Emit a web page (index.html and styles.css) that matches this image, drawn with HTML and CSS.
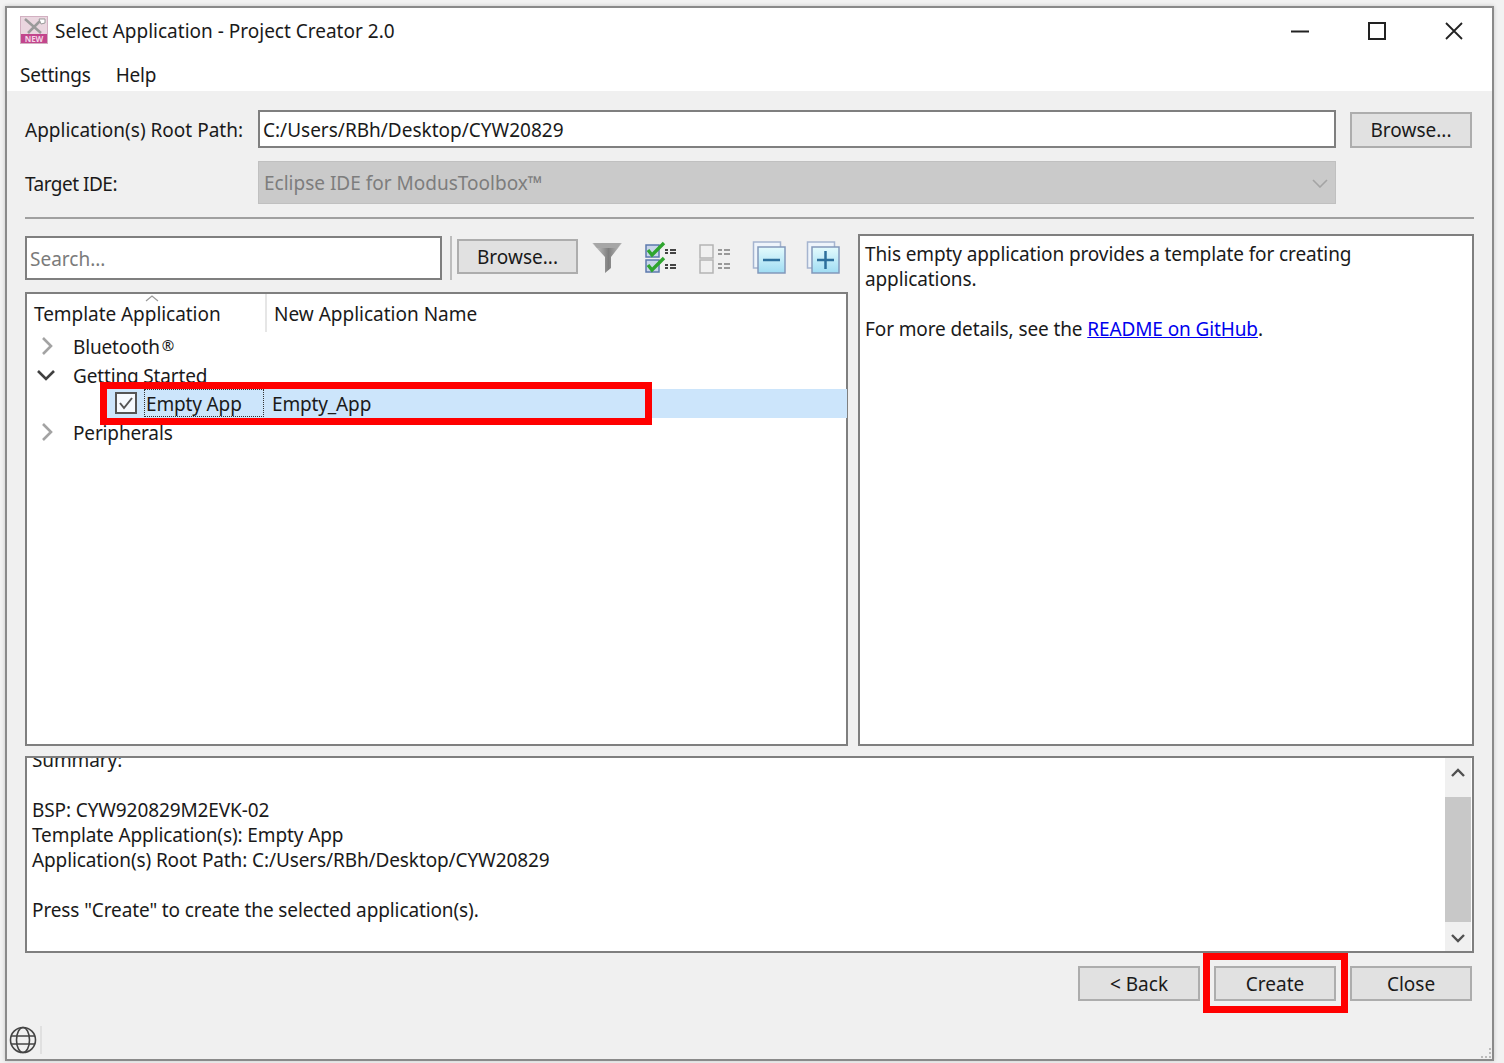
FILE: index.html
```html
<!DOCTYPE html>
<html lang="en">
<head>
<meta charset="utf-8">
<title>Select Application - Project Creator 2.0</title>
<link rel="stylesheet" href="styles.css">
</head>
<body>
<div class="window">
  <header class="titlebar">
    <svg class="app-icon" width="28" height="28" viewBox="0 0 28 28">
      <rect x="0.5" y="0.5" width="27" height="27" fill="#ead6df" stroke="#d2b0c1"/>
      <rect x="1" y="18" width="26" height="9" fill="#c2458c"/>
      <path d="M5 3 L21 17 M21 4 L8 17" stroke="#9a9a9a" stroke-width="2.5" fill="none"/>
      <path d="M19 3 L25 3 L25 7 L21 8z" fill="#ffffff" stroke="#999"/>
      <text x="14" y="26" class="app-icon-text">NEW</text>
    </svg>
    <span class="title">Select Application - Project Creator 2.0</span>
    <div class="win-controls">
      <svg width="18" height="18" viewBox="0 0 18 18"><path d="M0 9.5H18" stroke="#222" stroke-width="2"/></svg>
      <svg width="18" height="18" viewBox="0 0 18 18"><rect x="1" y="1" width="16" height="16" fill="none" stroke="#222" stroke-width="2"/></svg>
      <svg width="18" height="18" viewBox="0 0 18 18"><path d="M1 1L17 17M17 1L1 17" stroke="#222" stroke-width="1.8"/></svg>
    </div>
  </header>
  <nav class="menubar"><span>Settings</span><span>Help</span></nav>
  <main class="content">
    <div class="form-row root-row">
      <label class="form-label">Application(s) Root Path:</label>
      <div class="path-input">C:/Users/RBh/Desktop/CYW20829</div>
      <button class="btn">Browse...</button>
    </div>
    <div class="form-row ide-row">
      <label class="form-label target-label">Target IDE:</label>
      <div class="ide-select"><span>Eclipse IDE for ModusToolbox™</span>
        <svg width="16" height="9" viewBox="0 0 16 9"><path d="M1 1L8 8L15 1" fill="none" stroke="#a4a4a4" stroke-width="1.6"/></svg>
      </div>
    </div>
    <hr class="divider">
    <div class="panes">
      <section class="left-pane">
        <div class="toolbar">
          <div class="search">Search...</div>
          <div class="tool-sep"></div>
          <button class="btn">Browse...</button>
          <div class="tools">
            <svg width="34" height="34" viewBox="0 0 34 34">
              <defs><linearGradient id="fn" x1="0" x2="1" y1="0" y2="0"><stop offset="0" stop-color="#d6d6d6"/><stop offset=".55" stop-color="#7e7e7e"/><stop offset="1" stop-color="#c4c4c4"/></linearGradient></defs>
              <path d="M2 3H32L21 17V28L15 33V17Z" fill="url(#fn)"/><path d="M3 3H31L27 8H7Z" fill="#a6a6a6"/>
            </svg>
            <svg width="34" height="34" viewBox="0 0 34 34">
              <rect x="2" y="5" width="13" height="12" fill="#c9d5ea" stroke="#5c79ad" stroke-width="1.5"/>
              <rect x="2" y="20" width="13" height="12" fill="#c9d5ea" stroke="#5c79ad" stroke-width="1.5"/>
              <path d="M4 10L8 15L20 3M4 25L8 30L20 18" fill="none" stroke="#2fa52f" stroke-width="3.4"/>
              <path d="M21 12H24M26 12H32M21 15H24M26 15H32M21 27H24M26 27H32M21 30H24M26 30H32" stroke="#444" stroke-width="1.8" transform="translate(0,-2)"/>
            </svg>
            <svg width="34" height="34" viewBox="0 0 34 34">
              <rect x="2" y="5" width="13" height="13" fill="#f0f0f0" stroke="#b4b4b4" stroke-width="1.5"/>
              <rect x="2" y="20" width="13" height="13" fill="#f0f0f0" stroke="#b4b4b4" stroke-width="1.5"/>
              <path d="M20 10H24M26 10H32M20 14H24M26 14H32M20 24H24M26 24H32M20 28H24M26 28H32" stroke="#999" stroke-width="1.8"/>
            </svg>
            <svg width="34" height="34" viewBox="0 0 34 34">
              <defs><linearGradient id="bx" x1="0" x2="0" y1="0" y2="1"><stop offset="0" stop-color="#e4fbfd"/><stop offset="1" stop-color="#9fdcf3"/></linearGradient></defs>
              <rect x="1.5" y="2" width="27" height="26" fill="#eef4fb" stroke="#a5b4cf" stroke-width="1.5"/>
              <rect x="6" y="7" width="27" height="26" fill="url(#bx)" stroke="#8298bb" stroke-width="1.5"/>
              <path d="M11 20H28" stroke="#2d6f9c" stroke-width="2.5"/>
            </svg>
            <svg width="34" height="34" viewBox="0 0 34 34">
              <rect x="1.5" y="2" width="27" height="26" fill="#eef4fb" stroke="#a5b4cf" stroke-width="1.5"/>
              <rect x="6" y="7" width="27" height="26" fill="url(#bx)" stroke="#8298bb" stroke-width="1.5"/>
              <path d="M11 20H28M19.5 11V29" stroke="#2d6f9c" stroke-width="2.5"/>
            </svg>
          </div>
        </div>
        <div class="tree">
          <div class="tree-head">
            <svg class="sort-mark" width="14" height="7" viewBox="0 0 14 7"><path d="M1 6L7 1L13 6" fill="none" stroke="#9a9a9a" stroke-width="1.2"/></svg>
            <div class="col-a">Template Application</div>
            <div class="col-b">New Application Name</div>
          </div>
          <div class="tree-row">
            <svg class="chev" width="16" height="18" viewBox="0 0 16 18"><path d="M4 1L12 9L4 17" fill="none" stroke="#a3a3a3" stroke-width="2.6"/></svg>
            <span>Bluetooth<span class="reg">®</span></span>
          </div>
          <div class="tree-row">
            <svg class="chev chev-open" width="18" height="16" viewBox="0 0 18 16"><path d="M1 3L9 11L17 3" fill="none" stroke="#404040" stroke-width="2.6"/></svg>
            <span>Getting Started</span>
          </div>
          <div class="tree-row selected">
            <span class="check"><svg width="16" height="16" viewBox="0 0 16 16"><path d="M2 8L6 13L14 3" fill="none" stroke="#555" stroke-width="2"/></svg></span>
            <span class="focus-cell">Empty App</span>
            <span class="app-name">Empty_App</span>
          </div>
          <div class="tree-row">
            <svg class="chev" width="16" height="18" viewBox="0 0 16 18"><path d="M4 1L12 9L4 17" fill="none" stroke="#a3a3a3" stroke-width="2.6"/></svg>
            <span>Peripherals</span>
          </div>
        </div>
      </section>
      <section class="desc">
        <p>This empty application provides a template for creating applications.</p>
        <p>For more details, see the <a href="#">README on GitHub</a>.</p>
      </section>
    </div>
    <section class="summary">
      <div class="summary-text">
        <div>Summary:</div>
        <div>&nbsp;</div>
        <div>BSP: CYW920829M2EVK-02</div>
        <div>Template Application(s): Empty App</div>
        <div>Application(s) Root Path: C:/Users/RBh/Desktop/CYW20829</div>
        <div>&nbsp;</div>
        <div>Press "Create" to create the selected application(s).</div>
      </div>
      <div class="scrollbar">
        <svg width="14" height="10" viewBox="0 0 14 10"><path d="M1 8L7 2L13 8" fill="none" stroke="#505050" stroke-width="2.4"/></svg>
        <div class="thumb"></div>
        <svg width="14" height="10" viewBox="0 0 14 10"><path d="M1 2L7 8L13 2" fill="none" stroke="#505050" stroke-width="2.4"/></svg>
      </div>
    </section>
    <div class="actions">
      <button class="btn">&lt; Back</button>
      <button class="btn">Create</button>
      <button class="btn">Close</button>
    </div>
    <footer class="status">
      <svg width="28" height="28" viewBox="0 0 28 28" fill="none" stroke="#444" stroke-width="1.6">
        <circle cx="14" cy="14" r="12.5"/><ellipse cx="14" cy="14" rx="6.5" ry="12.5"/><path d="M2 10H26M2 18H26"/>
      </svg>
      <div class="status-sep"></div>
      <svg class="grip" width="10" height="10" viewBox="0 0 10 10"><path d="M8 0h2v2H8zM8 4h2v2H8zM4 8h2v2H4zM8 8h2v2H8zM0 8h2v2H0z" fill="#bbb"/></svg>
    </footer>
  </main>
  <div class="callout callout-row"></div>
  <div class="callout callout-create"></div>
</div>
</body>
</html>
```
FILE: styles.css
```css
* { box-sizing: border-box; }
html, body { margin: 0; height: 100%; }
body {
  background: #f2f2f2;
  padding: 6px 0 0 5px;
  font-family: "Noto Sans", "Open Sans", sans-serif;
  font-size: 19px;
  color: #1a1a1a;
  overflow: hidden;
}
.window {
  position: relative;
  width: 1489px;
  height: 1055px;
  border: 2px solid #8a8a8a;
  background: #fff;
  display: flex;
  flex-direction: column;
  box-shadow: 0 0 4px rgba(0,0,0,.18);
}
.titlebar {
  height: 44px;
  display: flex;
  align-items: center;
  padding: 0 30px 0 13px;
  flex: none;
}
.app-icon { flex: none; }
.app-icon-text { font-size: 8px; fill: #f4d4e6; text-anchor: middle; font-weight: 700; }
.title { margin-left: 7px; padding-top: 2px; }
.win-controls { margin-left: auto; display: flex; gap: 59px; margin-right: -1px; margin-top: 2px; }
.menubar {
  height: 39px;
  display: flex;
  gap: 25px;
  padding: 7px 0 0 13px;
  align-items: center;
  flex: none;
  letter-spacing: -.2px;
}
.content {
  flex: 1;
  background: #f0f0f0;
  padding: 19px 19px 0 18px;
  display: flex;
  flex-direction: column;
  min-height: 0;
}
.form-row { display: flex; align-items: center; flex: none; }
.root-row { height: 38px; }
.ide-row { height: 43px; margin-top: 13px; }
.form-label { width: 233px; flex: none; padding-top: 2px; }
.target-label { letter-spacing: -.5px; }
.path-input {
  width: 1078px;
  height: 38px;
  background: #fff;
  border: 2px solid #7f7f7f;
  padding: 2px 0 0 3px;
  display: flex;
  align-items: center;
  flex: none;
}
.root-row .btn { margin: 1px 0 0 14px; }
.ide-select {
  width: 1078px;
  height: 43px;
  background: #cacaca;
  border: 1px solid #c0c0c0;
  color: #7d7d7d;
  padding: 1px 7px 0 5px;
  display: flex;
  align-items: center;
  justify-content: space-between;
  flex: none;
}
.btn {
  width: 122px;
  height: 36px;
  background: #e1e1e1;
  border: 2px solid #adadad;
  font: inherit;
  color: #1a1a1a;
  padding: 0;
  flex: none;
}
.divider {
  border: 0;
  height: 2px;
  background: #a0a0a0;
  margin: 13px 0 15px;
  width: 1449px;
  flex: none;
}
.panes { display: flex; gap: 10px; height: 512px; flex: none; width: 1449px; }
.left-pane { width: 823px; display: flex; flex-direction: column; flex: none; padding-top: 1px; }
.toolbar { display: flex; align-items: center; height: 45px; flex: none; }
.search {
  width: 417px;
  height: 44px;
  background: #fff;
  border: 2px solid #7f7f7f;
  color: #7b7b7b;
  padding: 2px 0 0 3px;
  display: flex;
  align-items: center;
  flex: none;
}
.tool-sep { width: 2px; height: 44px; background: #bdbdbd; margin: 0 5px 0 8px; flex: none; }
.toolbar .btn { width: 121px; height: 35px; margin-top: -3px; padding-top: 2px; }
.tools { display: flex; gap: 20px; margin-left: 12px; margin-top: -2px; }
.tree {
  margin-top: 12px;
  flex: 1;
  background: #fff;
  border: 2px solid #7f7f7f;
  position: relative;
  min-height: 0;
}
.tree-head { display: flex; height: 38px; position: relative; align-items: center; }
.sort-mark { position: absolute; left: 118px; top: 1px; }
.col-a { width: 240px; padding-left: 7px; height: 100%; display: flex; align-items: center; border-right: 2px solid #e6e6e6; padding-top: 1px; letter-spacing: -.05px; }
.col-b { padding-left: 7px; padding-top: 1px; }
.tree-row { height: 28.6px; display: flex; align-items: center; position: relative; padding: 2px 0 0 46px; letter-spacing: -.15px; }
.tree-row .chev { position: absolute; left: 12px; top: 5px; }
.tree-row .chev-open { left: 10px; top: 7px; }
.reg { font-size: 15px; margin-left: 2px; vertical-align: 3px; }
.selected { background: #cce5fb; margin: 0 -1px 0 75px; padding: 0 0 0 13px; }
.selected .focus-cell, .selected .app-name { padding-top: 2px; }
.check {
  width: 22px;
  height: 22px;
  border: 2px solid #555;
  background: #f6fafe;
  display: flex;
  align-items: center;
  justify-content: center;
  flex: none;
}
.focus-cell {
  width: 120px;
  height: 28px;
  margin-left: 7px;
  padding-left: 1px;
  border: 1px dotted #333;
  display: flex;
  align-items: center;
  flex: none;
}
.app-name { margin-left: 8px; }
.desc {
  flex: 1;
  background: #fff;
  border: 2px solid #7f7f7f;
  padding: 6px 5px;
  line-height: 25px;
  letter-spacing: -.11px;
}
.desc p { margin: 0 0 25px; max-width: 520px; }
.desc a { color: #0000ee; }
.summary {
  margin-top: 10px;
  height: 197px;
  width: 1449px;
  background: #fff;
  border: 2px solid #7f7f7f;
  display: flex;
  flex: none;
  overflow: hidden;
}
.summary-text { flex: 1; padding-left: 5px; line-height: 25px; margin-top: -10px; letter-spacing: -.11px; }
.scrollbar {
  width: 26px;
  background: #f0f0f0;
  margin-right: 1px;
  display: flex;
  flex-direction: column;
  align-items: center;
  padding: 10px 0 8px;
  flex: none;
}
.thumb { width: 100%; height: 125px; background: #c8c8c8; margin: 19px 0 auto; }
.actions {
  display: flex;
  justify-content: flex-end;
  gap: 14px;
  margin-top: 13px;
  width: 1447px;
  flex: none;
}
.actions .btn { height: 35px; }
.status { flex: 1; display: flex; align-items: flex-end; position: relative; margin: 0 -19px 0 -18px; padding: 0 0 5px 2px; gap: 3px; }
.status-sep { width: 2px; height: 28px; background: #e0e0e0; }
.grip { position: absolute; right: 1px; bottom: 1px; }
.callout { position: absolute; border: 7px solid #ff0000; pointer-events: none; }
.callout-row { left: 93px; top: 374px; width: 552px; height: 43px; }
.callout-create { left: 1196px; top: 945px; width: 145px; height: 60px; }
```
